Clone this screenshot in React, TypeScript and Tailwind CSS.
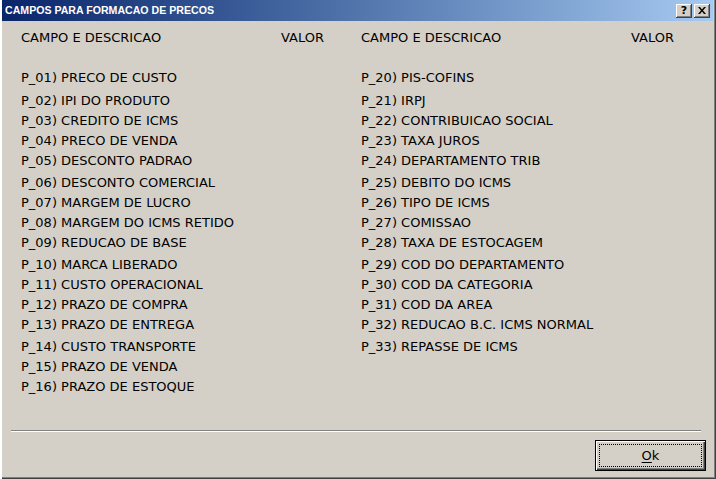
import React from 'react';

const left = [
  'P_01) PRECO DE CUSTO',
  'P_02) IPI DO PRODUTO',
  'P_03) CREDITO DE ICMS',
  'P_04) PRECO DE VENDA',
  'P_05) DESCONTO PADRAO',
  'P_06) DESCONTO COMERCIAL',
  'P_07) MARGEM DE LUCRO',
  'P_08) MARGEM DO ICMS RETIDO',
  'P_09) REDUCAO DE BASE',
  'P_10) MARCA LIBERADO',
  'P_11) CUSTO OPERACIONAL',
  'P_12) PRAZO DE COMPRA',
  'P_13) PRAZO DE ENTREGA',
  'P_14) CUSTO TRANSPORTE',
  'P_15) PRAZO DE VENDA',
  'P_16) PRAZO DE ESTOQUE',
];

const right = [
  'P_20) PIS-COFINS',
  'P_21) IRPJ',
  'P_22) CONTRIBUICAO SOCIAL',
  'P_23) TAXA JUROS',
  'P_24) DEPARTAMENTO TRIB',
  'P_25) DEBITO DO ICMS',
  'P_26) TIPO DE ICMS',
  'P_27) COMISSAO',
  'P_28) TAXA DE ESTOCAGEM',
  'P_29) COD DO DEPARTAMENTO',
  'P_30) COD DA CATEGORIA',
  'P_31) COD DA AREA',
  'P_32) REDUCAO B.C. ICMS NORMAL',
  'P_33) REPASSE DE ICMS',
];

// row gaps in the original dialog are not perfectly even
const rowClass = (i: number) => {
  if (i === 1) return 'h-5 mt-[3px]';
  if (i === 5 || i === 9 || i === 13) return 'h-5 mt-[2px]';
  return 'h-5';
};

function Column({ items, valorClass }: { items: string[]; valorClass: string }) {
  return (
    <div className="w-[340px] pl-[21px]">
      <div className="flex h-5 items-center">
        <span className={valorClass}>CAMPO E DESCRICAO</span>
        <span>VALOR</span>
      </div>
      <div className="mt-5">
        {items.map((t, i) => (
          <div key={t} className={`${rowClass(i)} flex items-center`}>
            {t}
          </div>
        ))}
      </div>
    </div>
  );
}

function TitleButton({ children }: { children: React.ReactNode }) {
  return (
    <div className="flex h-[14px] w-4 items-center justify-center bg-[#d4d0c8] text-[11px] font-bold leading-none text-black shadow-[inset_-1px_-1px_0_#404040,inset_1px_1px_0_#fff,inset_-2px_-2px_0_#808080]">
      {children}
    </div>
  );
}

export default function App() {
  return (
    <div className="relative h-[479px] w-[716px] overflow-hidden bg-[#d4d0c8] font-['DejaVu_Sans',sans-serif] text-[13px] text-black shadow-[inset_2px_0_0_#fff,inset_-1px_-1px_0_#404040,inset_-2px_-2px_0_#808080]">
      {/* title bar */}
      <div className="ml-[2px] mr-[3px] flex h-[21px] items-center bg-gradient-to-r from-[#0a246a] to-[#a6caf0] pl-[3px] pr-[3px]">
        <span className="font-['Liberation_Sans',sans-serif] text-[10.6px] font-bold text-white">
          CAMPOS PARA FORMACAO DE PRECOS
        </span>
        <div className="ml-auto flex gap-[2px]">
          <TitleButton>?</TitleButton>
          <TitleButton>
            <svg width="8" height="7" viewBox="0 0 8 7">
              <path d="M0 0h2l2 2.5L6 0h2L5 3.5 8 7H6L4 4.5 2 7H0l3-3.5z" fill="#000" />
            </svg>
          </TitleButton>
        </div>
      </div>

      <div className="flex pt-[7px]">
        <Column items={left} valorClass="w-[260px]" />
        <Column items={right} valorClass="w-[270px]" />
      </div>

      {/* separator + button */}
      <div className="absolute bottom-[8px] left-[11px] right-[15px]">
        <div className="h-[2px] border-t border-b border-t-[#808080] border-b-white" />
        <div className="mt-[8px] flex justify-end">
          <button className="mr-[-5px] flex h-[31px] w-[111px] items-center justify-center bg-[#d4d0c8] p-[4px] shadow-[inset_1px_1px_0_#000,inset_-1px_-1px_0_#000,inset_2px_2px_0_#fff,inset_-2px_-2px_0_#404040,inset_-3px_-3px_0_#808080]">
            <span className="flex h-full w-full items-center justify-center border border-dotted border-black">
              <span className="underline decoration-1 underline-offset-2">O</span>k
            </span>
          </button>
        </div>
      </div>
    </div>
  );
}
